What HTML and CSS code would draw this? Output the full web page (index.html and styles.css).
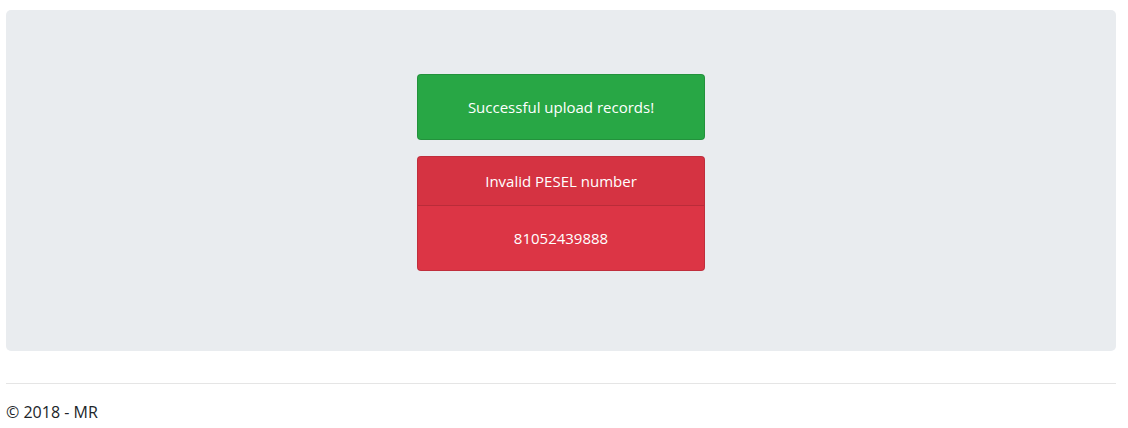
FILE: index.html
```html
<!DOCTYPE html>
<html>
<head>
<meta charset="utf-8">
<link rel="stylesheet" href="styles.css">
</head>
<body>
<div class="container">
  <div class="jumbotron">
    <div class="card card-success">
      <div class="card-body">Successful upload records!</div>
    </div>
    <div class="card card-danger">
      <div class="card-header">Invalid PESEL number</div>
      <div class="card-body">81052439888</div>
    </div>
  </div>
  <hr class="rule">
  <footer class="footer">© 2018 - MR</footer>
</div>
</body>
</html>
```
FILE: styles.css
```css
* { box-sizing: border-box; }
html, body { margin: 0; padding: 0; background: #fff; }
body {
  font-family: "Open Sans", "Noto Sans", sans-serif;
  font-size: 15px;
  line-height: 24px;
  color: #212529;
}
.container {
  width: 1110px;
  margin: 0 0 0 6px;
  padding-top: 10px;
}
.jumbotron {
  background: #e9ecef;
  border-radius: 5px;
  padding: 64px 32px;
  display: flex;
  flex-direction: column;
  align-items: center;
  margin-bottom: 32px;
}
.card {
  width: 288px;
  border: 1px solid rgba(0,0,0,.125);
  border-radius: 4px;
  color: #fff;
  text-align: center;
  margin-bottom: 16px;
  overflow: hidden;
}
.card-success { background: #28a745; }
.card-danger { background: #dc3545; }
.card-body { padding: 20px; }
.card-header {
  padding: 12px 20px;
  background: rgba(0,0,0,.03);
  border-bottom: 1px solid rgba(0,0,0,.125);
}
.rule {
  margin: 0 0 16px;
  border: 0;
  border-top: 1px solid rgba(0,0,0,.1);
  height: 0;
}
.footer { font-size: 16px; height: 28px; }
```
